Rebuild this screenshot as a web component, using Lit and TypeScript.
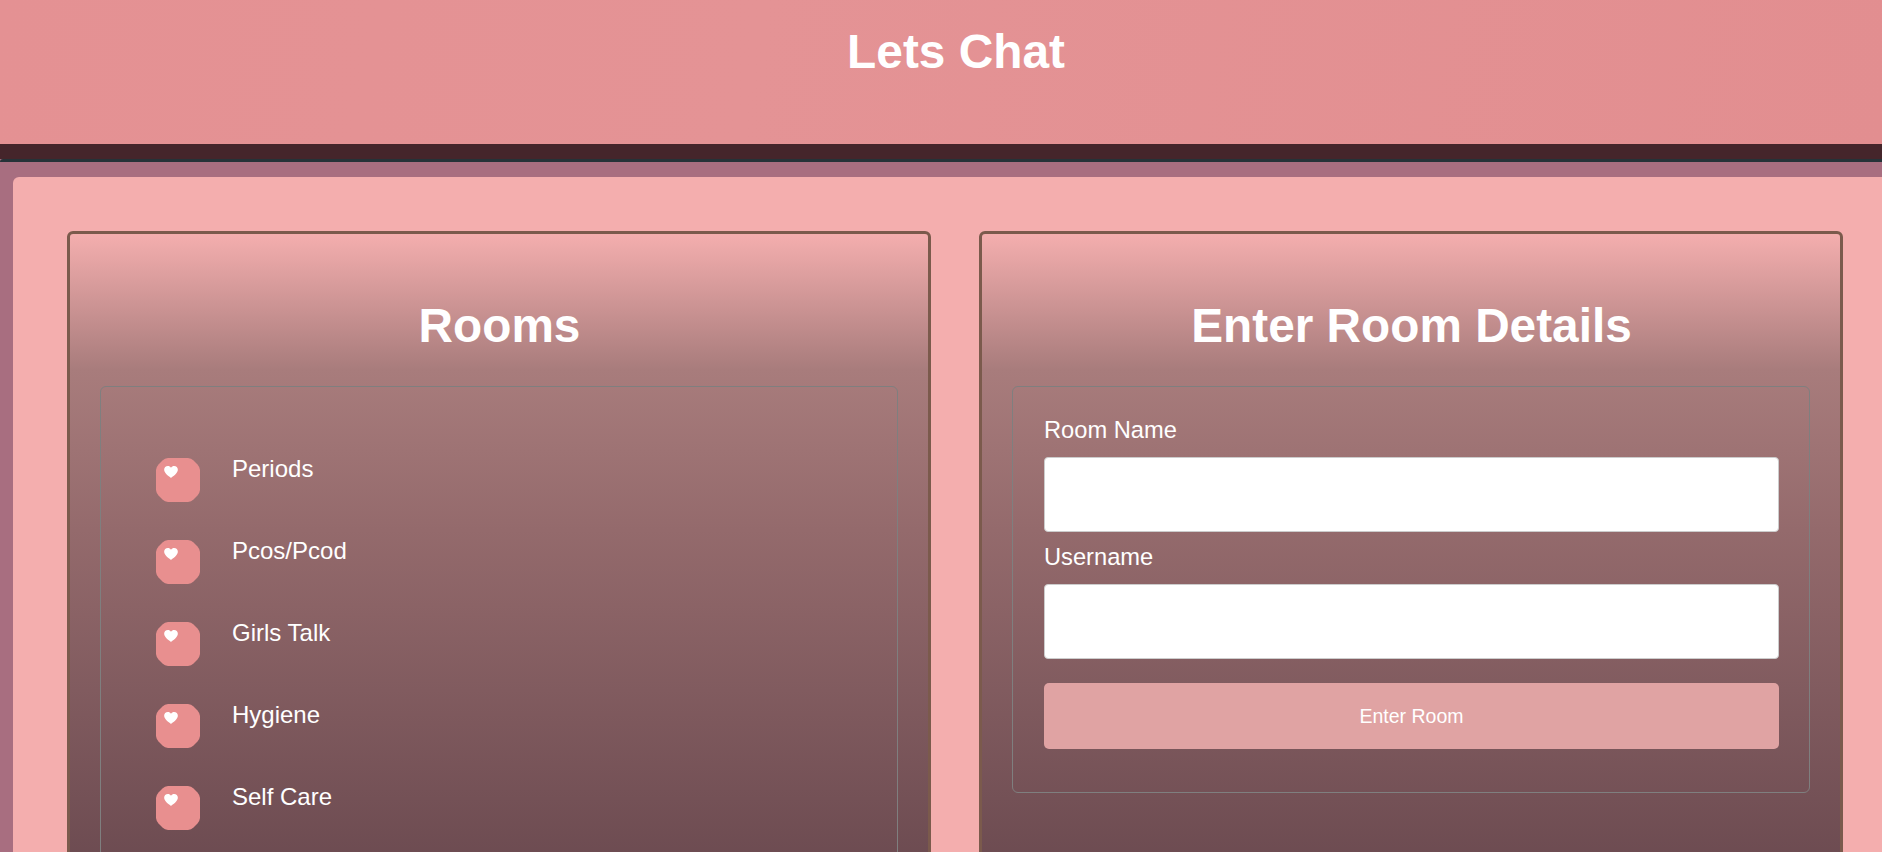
import { LitElement, html, css } from 'lit'
import { customElement, state } from 'lit/decorators.js'

@customElement('app-root')
export class AppRoot extends LitElement {
    @state()
    private _rooms = ['Periods', 'Pcos/Pcod', 'Girls Talk', 'Hygiene', 'Self Care']

    static get styles() {
        return css`
            :host {
                display: block;
                height: 100vh;
                overflow: hidden;
                background: #a86e80;
                font-family: 'Liberation Sans', Arial, sans-serif;
                color: #fff;
            }

            .top {
                box-sizing: border-box;
                height: 159px;
                padding: 24px 0 0 30px;
                border-bottom: 15px solid #45252b;
                background: linear-gradient(100deg, #e49193, #e49395 40%, #e28e90);
                text-align: center;
            }

            .top h1 {
                margin: 0;
                font-size: 47.8px;
                line-height: 55px;
                font-weight: 700;
            }

            .main {
                padding: 15px 0 0 13px;
                border-top: 3px solid #263238;
                border-top-left-radius: 3px;
            }

            .sheet {
                display: grid;
                grid-template-columns: 864px 864px;
                gap: 48px;
                padding: 54px 39px 0 54px;
                height: 900px;
                background: #f4aeae;
                border-radius: 6px 0 0 0;
            }

            .panel {
                box-sizing: border-box;
                padding: 0 30px;
                border: 3px solid #7b5a4c;
                border-radius: 6px;
                background: linear-gradient(
                    #f4aeae 0,
                    #a87c7c 136px,
                    #946a6c 296px,
                    #6b4a50 640px
                );
            }

            .panel h2 {
                margin: 64px 0 33px;
                padding-left: 1px;
                font-size: 47.75px;
                line-height: 55px;
                font-weight: 700;
                text-align: center;
            }

            .box {
                border: 1px solid #7f7f7f;
                border-radius: 6px;
            }

            .rooms {
                height: 700px;
                margin: 0;
                padding: 71px 55px 0;
                list-style: none;
            }

            .rooms li {
                display: flex;
                gap: 32px;
                margin-bottom: 38px;
                font-size: 24px;
                line-height: 22px;
            }

            .dot {
                box-sizing: border-box;
                flex: none;
                width: 44px;
                height: 44px;
                padding: 8px 0 0 8px;
                background: #e88f8f;
                clip-path: polygon(
                    12px 0,
                    32px 0,
                    35px 0.8px,
                    37.5px 2.5px,
                    41.5px 6.5px,
                    43.2px 9px,
                    44px 12px,
                    44px 32px,
                    43.2px 35px,
                    41.5px 37.5px,
                    37.5px 41.5px,
                    35px 43.2px,
                    32px 44px,
                    12px 44px,
                    9px 43.2px,
                    6.5px 41.5px,
                    2.5px 37.5px,
                    0.8px 35px,
                    0 32px,
                    0 12px,
                    0.8px 9px,
                    2.5px 6.5px,
                    6.5px 2.5px,
                    9px 0.8px
                );
            }

            .dot svg {
                display: block;
                width: 14px;
                height: 12px;
                fill: #fff;
            }

            .form {
                padding: 29px 30px 43px 31px;
            }

            .form label {
                display: block;
                margin: 11px 0 13px;
                font-size: 23.7px;
                line-height: 28px;
            }

            .form label:first-child {
                margin-top: 0;
            }

            .form input {
                display: block;
                box-sizing: border-box;
                width: 100%;
                height: 75px;
                border: 1px solid #ccc;
                border-radius: 4px;
                background: #fff;
            }

            .form button {
                display: block;
                width: 100%;
                height: 66px;
                margin-top: 24px;
                border: none;
                border-radius: 5px;
                background: #e0a3a3;
                color: #fff;
                font: 19.5px 'Liberation Sans', Arial, sans-serif;
            }
        `
    }

    render() {
        return html`
            <header class="top"><h1>Lets Chat</h1></header>
            <div class="main">
                <div class="sheet">
                    <section class="panel">
                        <h2>Rooms</h2>
                        <ul class="box rooms">
                            ${this._rooms.map(
                                (room) => html`
                                    <li>
                                        <span class="dot">
                                            <svg viewBox="0 0 24 21">
                                                <path
                                                    d="M12 21C9 18 0 13 0 6.5 0 3 2.8 0 6.5 0 8.8 0 10.8 1.2 12 3.2 13.2 1.2 15.2 0 17.5 0 21.2 0 24 3 24 6.5 24 13 15 18 12 21z"
                                                />
                                            </svg>
                                        </span>
                                        <span>${room}</span>
                                    </li>
                                `
                            )}
                        </ul>
                    </section>
                    <section class="panel">
                        <h2>Enter Room Details</h2>
                        <form class="box form">
                            <label for="room">Room Name</label>
                            <input id="room" type="text" />
                            <label for="username">Username</label>
                            <input id="username" type="text" />
                            <button type="button">Enter Room</button>
                        </form>
                    </section>
                </div>
            </div>
        `
    }
}
